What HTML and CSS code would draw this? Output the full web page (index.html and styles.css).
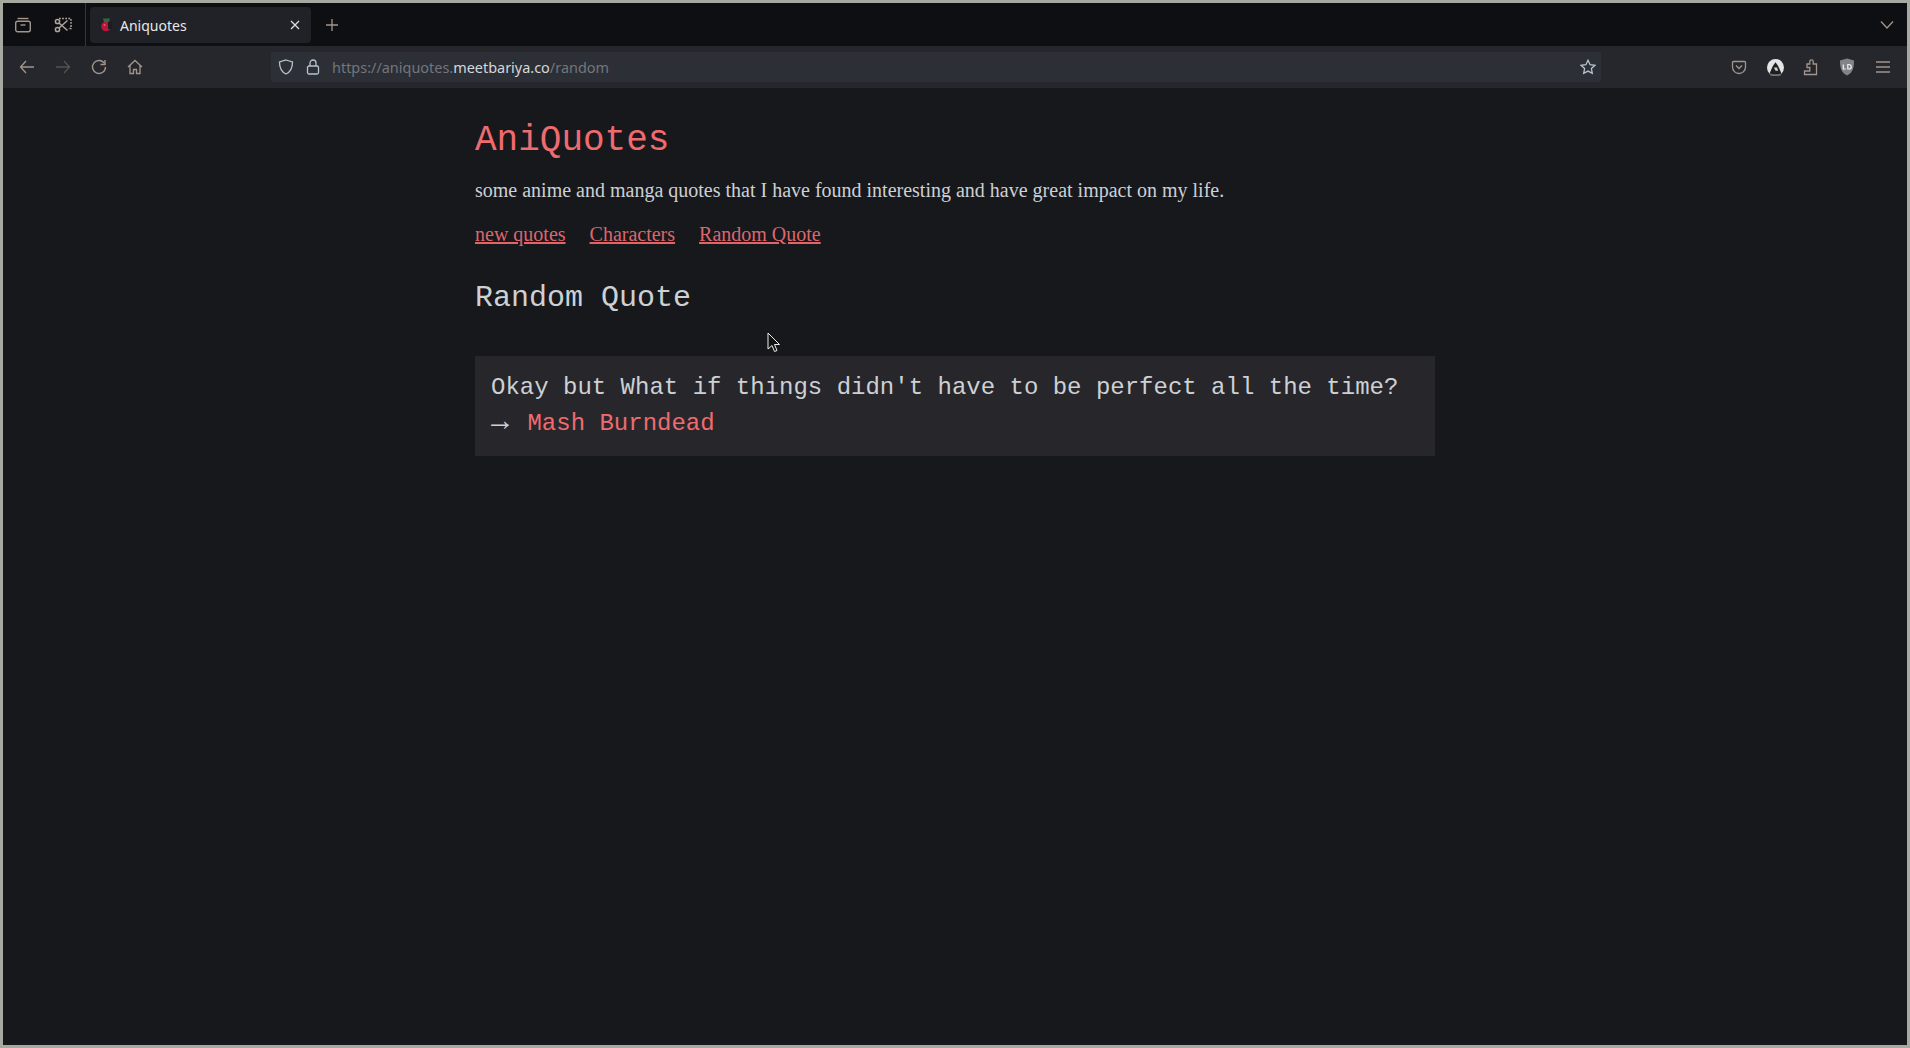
FILE: index.html
```html
<!DOCTYPE html>
<html lang="en">
<head>
  <meta charset="UTF-8">
  <title>Aniquotes</title>
  <link rel="stylesheet" href="styles.css">
</head>
<body>
  <div class="window">
    <div class="tabbar">
      <div class="tab-icon">
        <svg width="18" height="18" viewBox="0 0 18 18" fill="none" stroke="#a3958c" stroke-width="1.4"><path d="M3.500 2.500h11"/><rect x="1.700" y="5.200" width="14.600" height="10.600" rx="2"/><path d="M6.500 9h5"/></svg>
      </div>
      <div class="tab-icon">
        <svg width="18" height="18" viewBox="0 0 18 18" fill="none" stroke="#b0a49b" stroke-width="1.500"><path d="M5 2.500h12v10h-3" stroke-dasharray="1.800 1.300"/><circle cx="3.500" cy="5.500" r="2.100"/><circle cx="3.500" cy="13.500" r="2.100"/><path d="M5 7 13.500 14.500M5 12 13.500 4.500"/></svg>
      </div>
      <div class="tab-sep"></div>
      <div class="tab">
        <svg class="favicon" width="11" height="14" viewBox="0 0 11 14"><path d="M2 .5h7L8 4H3z" fill="#2f6b3a"/><circle cx="5" cy="8.500" r="4.800" fill="#b8173a"/><path d="M7 4h4v7H7z" fill="#1c1c22"/><circle cx="3.500" cy="7" r="1" fill="#e8587a"/></svg>
        <span class="tab-title">Aniquotes</span>
        <svg class="tab-close" width="12" height="12" viewBox="0 0 12 12" stroke="#dcdcdc" stroke-width="1.300"><path d="M2 2l8 8M10 2l-8 8"/></svg>
      </div>
      <div class="new-tab">
        <svg width="14" height="14" viewBox="0 0 14 14" stroke="#a3958c" stroke-width="1.300"><path d="M7 1v12M1 7h12"/></svg>
      </div>
      <div class="tab-list">
        <svg width="14" height="10" viewBox="0 0 14 10" fill="none" stroke="#a3958c" stroke-width="1.300"><path d="M1 1.500l6 6.500 6-6.500"/></svg>
      </div>
    </div>

    <div class="navbar">
      <div class="nav-btn">
        <svg width="16" height="16" viewBox="0 0 16 16" fill="none" stroke="#a3958c" stroke-width="1.300"><path d="M15 8H1.500M7 2 1.500 8 7 14"/></svg>
      </div>
      <div class="nav-btn">
        <svg width="16" height="16" viewBox="0 0 16 16" fill="none" stroke="#55534f" stroke-width="1.300"><path d="M1 8h13.500M9 2l5.500 6L9 14"/></svg>
      </div>
      <div class="nav-btn">
        <svg width="16" height="16" viewBox="0 0 16 16" fill="none" stroke="#a3958c" stroke-width="1.400"><path d="M13.500 4.500A6.500 6.500 0 1 0 14.500 8"/><path d="M14 1v4.500H9.500"/></svg>
      </div>
      <div class="nav-btn">
        <svg width="16" height="16" viewBox="0 0 16 16" fill="none" stroke="#a3958c" stroke-width="1.300"><path d="M1 8 8 1.500 15 8M3 6.500V14.500h3.500v-4h3v4H13V6.500"/></svg>
      </div>

      <div class="urlbar">
        <svg class="shield" width="16" height="16" viewBox="0 0 16 16" fill="none" stroke="#b8c4cc" stroke-width="1.300"><path d="M8 1 14.500 3c0 5.500-1 9.500-6.500 12C2.500 12.500 1.500 8.500 1.500 3z"/></svg>
        <svg class="lock" width="14" height="16" viewBox="0 0 14 16" fill="none" stroke="#b8c4cc" stroke-width="1.300"><rect x="1.500" y="7" width="11" height="8" rx="1.500"/><path d="M4 7V4a3 3 0 0 1 6 0v3"/></svg>
        <span class="url"><span class="url-dim">https://aniquotes.</span><span class="url-host">meetbariya.co</span><span class="url-dim">/random</span></span>
        <svg class="star" width="16" height="16" viewBox="0 0 16 16" fill="none" stroke="#b8c4cc" stroke-width="1.300"><path d="M8 1.300l2.100 4.400 4.800.6-3.500 3.300.9 4.800L8 12.100l-4.300 2.300.9-4.800L1.100 6.300l4.800-.6z"/></svg>
      </div>

      <div class="nav-right">
        <div class="nav-btn">
          <svg width="16" height="16" viewBox="0 0 16 16" fill="none" stroke="#a3958c" stroke-width="1.300"><path d="M2.500 2.500h11a1 1 0 0 1 1 1V8a6.500 6.500 0 0 1-13 0V3.500a1 1 0 0 1 1-1z"/><path d="M5 6.500 8 9.500l3-3"/></svg>
        </div>
        <div class="nav-btn">
          <svg width="17" height="17" viewBox="0 0 16 16"><circle cx="8" cy="8" r="8" fill="#e4e4e4"/><path d="M8 3 10.500 6.500 13.500 13.500a8 8 0 0 1-11 0L5.500 6.500z" fill="#1f1f23"/><path d="M6.500 8h3l1 3h-2.500z" fill="#cfcfcf"/><path d="M3 14.500h10v1H3z" fill="#8a8a8a"/></svg>
        </div>
        <div class="nav-btn">
          <svg width="16" height="18" viewBox="0 0 16 18" fill="none" stroke="#a3958c" stroke-width="1.300"><path d="M1.500 16.500h12V6h-3.300V3.500a1.700 1.700 0 0 0-3.400 0V6H4v3.500h2.800v3.500H1.500z"/></svg>
        </div>
        <div class="nav-btn">
          <svg width="16" height="18" viewBox="0 0 16 18"><path d="M8 .5 15 2.500c0 7-1 12-7 15C2 14.500 1 9.500 1 2.500z" fill="#808388"/><path d="M4.300 6.500v4.500h2.500M8.800 6.500v4.500h1.200a2.200 2.200 0 0 0 0-4.500z" fill="none" stroke="#f0f0f0" stroke-width="1.200"/></svg>
        </div>
        <div class="nav-btn">
          <svg width="16" height="14" viewBox="0 0 16 14" stroke="#a3958c" stroke-width="1.300"><path d="M1 2h14M1 7h14M1 12h14"/></svg>
        </div>
      </div>
    </div>

    <main class="page">
      <div class="content">
        <h1 class="site-title">AniQuotes</h1>
        <p class="tagline">some anime and manga quotes that I have found interesting and have great impact on my life.</p>
        <nav class="links">
          <a href="#">new quotes</a>
          <a href="#">Characters</a>
          <a href="#">Random Quote</a>
        </nav>
        <h2 class="section-title">Random Quote</h2>
        <div class="quote">
          <div>Okay but What if things didn't have to be perfect all the time?</div>
          <div><span class="arrow">→</span> <a href="#">Mash Burndead</a></div>
        </div>
      </div>
      <svg class="cursor" width="14" height="22" viewBox="0 0 14 22"><path d="M1 1v16l4-3.500 2.500 6 2.500-1-2.500-6H12.500z" fill="#111" stroke="#eee" stroke-width="1"/></svg>
    </main>
  </div>
</body>
</html>
```

FILE: styles.css
```css
* {
  box-sizing: border-box;
}

html, body {
  height: 100%;
}

body {
  margin: 0;
  padding: 3px;
  background-color: #a6a99f;
  overflow: hidden;
}

.window {
  display: flex;
  flex-direction: column;
  height: 100%;
  font-family: "Noto Sans", sans-serif;
}

/* tab strip */
.tabbar {
  display: flex;
  align-items: center;
  height: 43px;
  background-color: #0d0f12;
}

.tab-icon {
  display: flex;
  align-items: center;
  justify-content: center;
  width: 40px;
  height: 100%;
}

.tab-sep {
  width: 1px;
  height: 100%;
  margin: 0 4px 0 2px;
  background-color: #34363a;
}

.tab {
  display: flex;
  align-items: center;
  width: 221px;
  height: 36px;
  padding: 0 10px 0 11px;
  border-radius: 4px;
  background-color: #212228;
}

.favicon {
  flex-shrink: 0;
}

.tab-title {
  margin-left: 8px;
  padding-top: 2px;
  color: #e8e8e8;
  font-size: 14px;
}

.tab-close {
  margin-left: auto;
}

.new-tab {
  display: flex;
  justify-content: center;
  width: 42px;
}

.tab-list {
  display: flex;
  margin-left: auto;
  margin-right: 13px;
}

/* toolbar */
.navbar {
  display: flex;
  align-items: center;
  height: 42px;
  padding: 0 6px;
  background-color: #25272d;
}

.nav-btn {
  display: flex;
  align-items: center;
  justify-content: center;
  width: 36px;
  height: 36px;
}

.urlbar {
  display: flex;
  align-items: center;
  width: 1330px;
  height: 30px;
  margin-left: 118px;
  padding: 0 5px 0 7px;
  border-radius: 2px;
  background-color: #2c2f35;
  font-size: 14.45px;
}

.lock {
  margin-left: 12px;
}

.url {
  margin-left: 12px;
}

.url-dim {
  color: #73767d;
}

.url-host {
  color: #d5d8dc;
}

.star {
  margin-left: auto;
}

.nav-right {
  display: flex;
  margin-left: auto;
}

/* page */
.page {
  position: relative;
  flex: 1;
  background-color: #17181c;
}

.content {
  width: 960px;
  margin: 0 auto;
  padding-top: 26px;
  font-family: "Liberation Serif", serif;
  font-size: 20px;
  color: #cdd0d4;
}

.site-title {
  margin: 0;
  color: #ef6b70;
  font-family: "Liberation Mono", monospace;
  font-size: 36px;
  font-weight: normal;
  line-height: 54px;
}

.tagline {
  margin: 7px 0 0;
  line-height: 30px;
}

.links {
  display: flex;
  gap: 24px;
  margin-top: 14px;
  line-height: 30px;
}

.links a {
  color: #de666b;
}

.section-title {
  margin: 27px 0 0;
  font-family: "Liberation Mono", monospace;
  font-size: 30px;
  font-weight: normal;
  line-height: 45px;
}

.quote {
  margin-top: 35px;
  padding: 14px 16px;
  background-color: #27272b;
  font-family: "Liberation Mono", monospace;
  font-size: 24px;
  line-height: 36px;
}

.arrow {
  margin-right: 4px;
  font-size: 30px;
  line-height: 1;
}

.quote a {
  color: #ef6b70;
  text-decoration: none;
}

.cursor {
  position: absolute;
  left: 764px;
  top: 244px;
}
```
